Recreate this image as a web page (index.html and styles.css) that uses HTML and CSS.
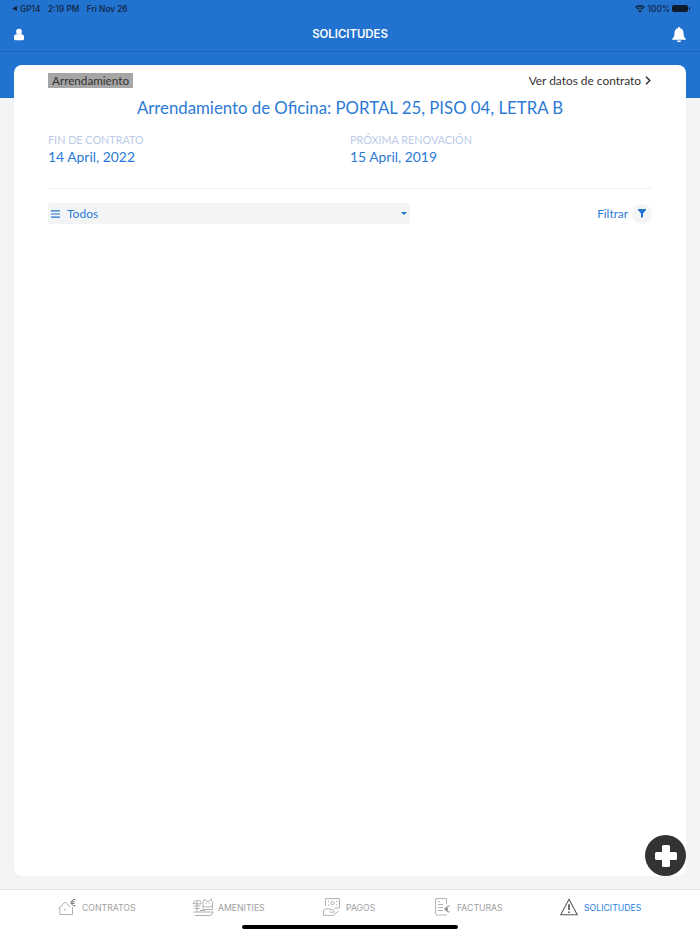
FILE: index.html
```html
<!DOCTYPE html>
<html lang="en">
<head>
    <meta charset="UTF-8">
    <meta name="viewport" content="width=device-width, initial-scale=1.0">
    <title>Solicitudes</title>
    <link rel="stylesheet" href="styles.css">
</head>
<body>
    <div class="app">
        <header class="topbar">
            <div class="status-bar">
                <div class="status-left">
                    <svg class="back-arrow" viewBox="0 0 6 6"><path d="M0 3 6 0V6Z"/></svg>
                    <span>GP14</span>
                    <span>2:19 PM</span>
                    <span>Fri Nov 26</span>
                </div>
                <div class="status-right">
                    <svg class="wifi" viewBox="0 0 16 12"><path d="M8 12 5.400 9a3.600 3.600 0 0 1 5.200 0ZM3.900 7.400 2.400 5.700a8 8 0 0 1 11.200 0l-1.500 1.700a5.800 5.800 0 0 0-8.200 0ZM1.400 4.600 0 3a11.600 11.600 0 0 1 16 0l-1.400 1.600a9.600 9.600 0 0 0-13.200 0Z"/></svg>
                    <span>100%</span>
                    <span class="battery"></span>
                </div>
            </div>
            <div class="navbar">
                <div class="nav-side">
                    <svg class="nav-icon" viewBox="0 0 12 14"><circle cx="6" cy="3.600" r="3.400"/><path d="M0 12V9.600a3 3 0 0 1 3-3h6a3 3 0 0 1 3 3V12a2 2 0 0 1-2 2H2a2 2 0 0 1-2-2Z"/></svg>
                </div>
                <h1>SOLICITUDES</h1>
                <div class="nav-side right">
                    <svg class="nav-icon bell" viewBox="0 0 14 15"><path d="M7 0a1.100 1.100 0 0 1 1.100 1.200C10.500 1.700 11.500 3.500 11.500 6c0 3.200.8 4.500 2.200 5.700.4.400.2 1.100-.5 1.100H.8c-.7 0-.9-.7-.5-1.100C1.700 10.500 2.500 9.200 2.500 6c0-2.500 1-4.300 3.400-4.800A1.100 1.100 0 0 1 7 0ZM5 13.400h4a2 2 0 0 1-4 0Z"/></svg>
                </div>
            </div>
        </header>

        <main class="content">
            <section class="card">
                <div class="card-top">
                    <span class="tag">Arrendamiento</span>
                    <a class="contract-link">Ver datos de contrato
                        <svg class="chevron" viewBox="0 0 6 9"><path d="M1 .7 4.800 4.500 1 8.300"/></svg>
                    </a>
                </div>
                <h2 class="card-title">Arrendamiento de Oficina: PORTAL 25, PISO 04, LETRA B</h2>
                <div class="dates">
                    <div>
                        <div class="date-label">FIN DE CONTRATO</div>
                        <div class="date-value">14 April, 2022</div>
                    </div>
                    <div>
                        <div class="date-label">PRÓXIMA RENOVACIÓN</div>
                        <div class="date-value">15 April, 2019</div>
                    </div>
                </div>
                <div class="toolbar">
                    <div class="select">
                        <svg class="menu-icon" viewBox="0 0 9 8"><path d="M0 .8h9M0 4h9M0 7.200h9"/></svg>
                        <span>Todos</span>
                        <span class="caret"></span>
                    </div>
                    <div class="filter">
                        <span>Filtrar</span>
                        <span class="filter-btn">
                            <svg viewBox="0 0 8 9"><path d="M0 0H8V1L5 4.500V8L3 9V4.500L0 1Z"/></svg>
                        </span>
                    </div>
                </div>
                <button class="fab" type="button">
                    <svg viewBox="0 0 22 22"><path d="M7 1.500A1.500 1.500 0 0 1 8.500 0h5A1.500 1.500 0 0 1 15 1.500V7h5.500A1.500 1.500 0 0 1 22 8.500v5a1.500 1.500 0 0 1-1.500 1.500H15v5.500a1.500 1.500 0 0 1-1.500 1.500h-5A1.500 1.500 0 0 1 7 20.500V15H1.500A1.500 1.500 0 0 1 0 13.500v-5A1.500 1.500 0 0 1 1.500 7H7Z"/></svg>
                </button>
            </section>
        </main>

        <nav class="tabbar">
            <a class="tab">
                <svg class="tab-icon" viewBox="0 0 18 18"><path d="M.5 10.500 7 4l5 4.800M1.800 9.500V16.500H14.500V9M7 10.500v2.500"/><path class="thick" d="M17.500 1.800c-2-1-3.800.3-3.800 2.900s1.800 3.900 3.800 2.900M12.500 3.800h4M12.500 5.500h4"/></svg>
                <span>CONTRATOS</span>
            </a>
            <a class="tab amenities">
                <svg class="tab-icon wide" viewBox="0 0 22 18"><path d="M1 5.500C2.500 2.500 6 1.500 9 3.500V6ZM5 2.500V14M1.500 8H8.500M2.500 10.500H7.500M11 4.500 12.500 1 14.500 3.500H17L19 .8 20.500 4.500V11.500H11ZM11.500 8c2.500 1.500 6 1.500 8.500 0M13.500 5.500h1M16.500 5.500h1M1 14H21M3 17.500H19L21 14M8 12.500h5"/></svg>
                <span>AMENITIES</span>
            </a>
            <a class="tab">
                <svg class="tab-icon pay" viewBox="0 0 17 18"><path d="M2.500 8V.6H16.500V10H11.500M5 3.300h1.200M13 3.300h1.200M5 7h1.200M13 7h1.200M.6 12.500C2.500 10.500 5 10.500 7 11.200L10.500 12.200C12 12.800 11.500 14.500 10 14.300L6.500 14M.6 12.500V17.400H10L15.500 13"/><circle cx="9.500" cy="5.200" r="1.600"/></svg>
                <span>PAGOS</span>
            </a>
            <a class="tab bills">
                <svg class="tab-icon bill" viewBox="0 0 15 18"><path d="M.6 16V.6H11.500V5.500M3 3.500H5M3 6.500H8M3 9.500H8M3 12.500H8M.6 16.500 2 17.500 3.400 16.500 4.800 17.500 6.200 16.500 7.600 17.500 9 16.500 10.400 17.500 11.800 16.500"/><path class="thick" d="M14.600 8.300c-1.800-.8-3.200.4-3.200 2.700s1.400 3.500 3.200 2.700M9.500 10.300h3.500M9.500 11.900h3.500"/></svg>
                <span>FACTURAS</span>
            </a>
            <a class="tab active">
                <svg class="tab-icon alert" viewBox="0 0 18 17"><path d="M9 .8 17.300 16.300H.7Z"/><path class="mark" d="M9 5.800V11.500M9 13V14.500"/></svg>
                <span>SOLICITUDES</span>
            </a>
            <div class="home-bar"></div>
        </nav>
    </div>
</body>
</html>
```

FILE: styles.css
```css
* {
    box-sizing: border-box;
}

body {
    font-family: 'Lato', 'Open Sans', sans-serif;
    margin: 0;
    padding: 0;
    background-color: #f3f4f6;
}

.app {
    display: flex;
    flex-direction: column;
    height: 934px;
    overflow: hidden;
}

.topbar {
    background-color: #2272d0;
    height: 98px;
    flex-shrink: 0;
}

.status-bar {
    display: flex;
    justify-content: space-between;
    align-items: center;
    height: 17px;
    padding: 0 11px 0 12px;
    font-family: 'Inter', 'Liberation Sans', sans-serif;
    font-size: 8.300px;
    font-weight: 500;
    color: #10243c;
}

.status-left,
.status-right {
    display: flex;
    align-items: center;
}

.status-left span {
    margin-right: 7.500px;
}

.back-arrow {
    width: 5px;
    height: 5px;
    fill: #10243c;
    margin-right: 3px;
}

.wifi {
    width: 10px;
    height: 8px;
    fill: #10243c;
    margin-right: 3px;
}

.battery {
    position: relative;
    display: block;
    width: 16px;
    height: 7px;
    margin-left: 2px;
    margin-right: 1px;
    border-radius: 2px;
    background-color: #0c1a2c;
}

.battery::after {
    content: '';
    position: absolute;
    right: -1.500px;
    top: 2px;
    width: 1px;
    height: 3px;
    background-color: #10243c;
}

.navbar {
    display: grid;
    grid-template-columns: 1fr auto 1fr;
    align-items: center;
    height: 35px;
    padding: 0 14px;
    border-bottom: 1px solid #1e65ba;
}

.navbar h1 {
    margin: 0;
    font-family: 'Inter', 'Liberation Sans', sans-serif;
    font-size: 11.400px;
    font-weight: 600;
    color: #fff;
}

.nav-side {
    display: flex;
}

.nav-side.right {
    justify-content: flex-end;
}

.nav-icon {
    width: 10px;
    height: 13px;
    fill: #fff;
}

.nav-icon.bell {
    width: 14px;
    height: 15px;
}

.content {
    flex: 1;
    padding: 0 14px 13px;
    margin-top: -33px;
    display: flex;
}

.card {
    position: relative;
    flex: 1;
    min-width: 0;
    background-color: #fff;
    border-radius: 8px;
    padding: 8px 34px 0;
}

.card-top {
    display: flex;
    justify-content: space-between;
    align-items: center;
}

.tag {
    background-color: #a6a6a6;
    color: #333;
    font-size: 11.700px;
    line-height: 15px;
    padding: 0 4px;
}

.contract-link {
    display: flex;
    align-items: center;
    color: #333;
    font-size: 11.900px;
    line-height: 15px;
}

.chevron {
    width: 6px;
    height: 9px;
    margin: 0 1px 0 4px;
    fill: none;
    stroke: #333;
    stroke-width: 1.500;
}

.card-title {
    margin: 10px 0 0;
    font-size: 16.800px;
    font-weight: 400;
    line-height: 20px;
    text-align: center;
    color: #2c7ad6;
}

.dates {
    display: grid;
    grid-template-columns: 302px 1fr;
    margin-top: 15px;
    padding-bottom: 21px;
    border-bottom: 1px solid #f0f1f3;
}

.date-label {
    font-size: 10.800px;
    line-height: 14px;
    color: #bccbe8;
}

.date-value {
    font-size: 13.900px;
    line-height: 20px;
    color: #2c7ad6;
}

.toolbar {
    display: flex;
    justify-content: space-between;
    align-items: center;
    margin-top: 14px;
}

.select {
    display: flex;
    align-items: center;
    width: 362px;
    height: 21px;
    padding: 0 3px;
    border-radius: 3px;
    background-color: #f3f4f6;
    font-size: 12px;
    color: #2c7ad6;
}

.menu-icon {
    width: 9px;
    height: 8px;
    margin-right: 7px;
    fill: none;
    stroke: #2272d0;
    stroke-width: 1.200;
}

.caret {
    margin-left: auto;
    border-top: 3px solid #2272d0;
    border-left: 3px solid transparent;
    border-right: 3px solid transparent;
}

.filter {
    display: flex;
    align-items: center;
    font-size: 11.800px;
    color: #2c7ad6;
}

.filter-btn {
    display: flex;
    justify-content: center;
    align-items: center;
    width: 20px;
    height: 20px;
    margin-left: 4px;
    border-radius: 50%;
    background-color: #f3f4f6;
}

.filter-btn svg {
    width: 8px;
    height: 9px;
    fill: #2272d0;
}

.fab {
    position: absolute;
    right: 0;
    bottom: 0;
    display: flex;
    justify-content: center;
    align-items: center;
    width: 41px;
    height: 41px;
    padding: 0;
    border: none;
    border-radius: 50%;
    background-color: #333;
}

.fab svg {
    width: 22px;
    height: 22px;
    fill: #fff;
}

.tabbar {
    position: relative;
    display: grid;
    grid-template-columns: 134px 131px 112px 125px 1fr;
    height: 45px;
    flex-shrink: 0;
    padding: 8px 0 0 58px;
    background-color: #fff;
    border-top: 1px solid #e4e5e8;
}

.tab {
    display: flex;
    align-items: center;
    height: 18px;
    font-family: 'Inter', 'Liberation Sans', sans-serif;
    font-size: 8.700px;
    color: #a0a0a0;
}

.tab span {
    margin: 2px 0 0 6px;
}

.tab.amenities span {
    margin-left: 4px;
}

.tab.bills span {
    margin-left: 7px;
}

.tab-icon {
    width: 18px;
    height: 18px;
    fill: none;
    stroke: #a8a8a8;
    stroke-width: .9;
}

.tab-icon.wide {
    width: 22px;
}

.tab-icon.pay {
    width: 17px;
}

.tab-icon.bill {
    width: 15px;
}

.tab-icon .thick {
    stroke: #777;
    stroke-width: 1;
}

.tab.active {
    color: #2a82e4;
}

.tab-icon.alert {
    stroke: #555;
    stroke-width: 1.100;
}

.tab-icon.alert .mark {
    stroke-width: 1.700;
}

.home-bar {
    position: absolute;
    left: 242px;
    bottom: 5px;
    width: 216px;
    height: 4px;
    border-radius: 2px;
    background-color: #000;
}
```
